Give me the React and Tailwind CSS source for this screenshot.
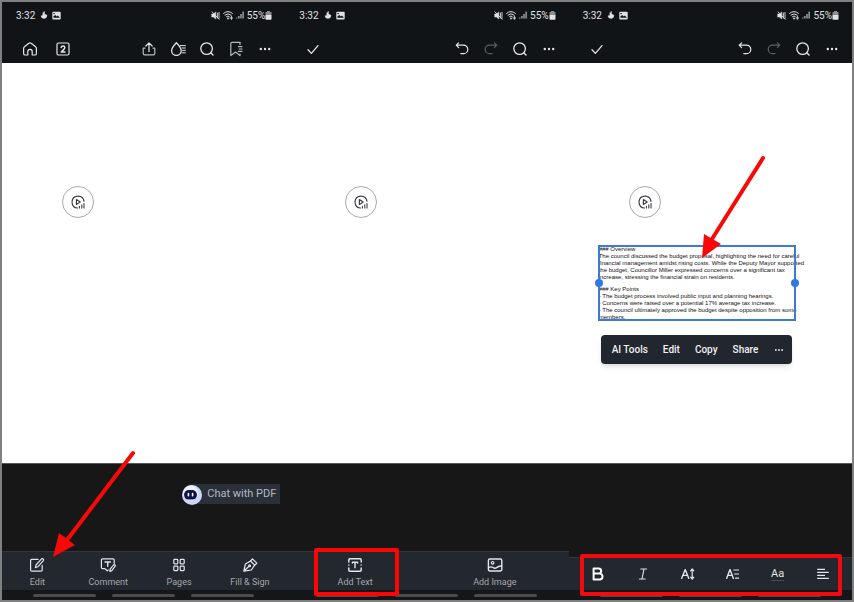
function Icon({ children, className = 'size-4', box = '0 0 16 16', label }) {
    return (
        <svg
            viewBox={box}
            className={className}
            fill="none"
            stroke="currentColor"
            strokeWidth="1.2"
            strokeLinecap="round"
            strokeLinejoin="round"
            role={label ? 'img' : undefined}
            aria-label={label}
            aria-hidden={label ? undefined : true}
        >
            {children}
        </svg>
    );
}

const icons = {
    home: <path d="M1.6 7.4 Q1.6 6.4 2.4 5.8 L6.9 2.2 Q8 1.5 9.1 2.2 L13.6 5.8 Q14.4 6.4 14.4 7.4 V12.4 Q14.4 14 12.8 14 H10.2 V10.6 A2.2 2.2 0 0 0 5.8 10.6 V14 H3.2 Q1.6 14 1.6 12.4 Z" />,
    tabs: (
        <>
            <rect x="2" y="2" width="12" height="12" rx="1.5" />
            <path d="M6.2 6.4 Q6.4 5 8 5 Q9.8 5 9.8 6.5 Q9.8 7.5 8.6 8.6 L6.2 11 H10" strokeWidth="1.5" />
        </>
    ),
    share: (
        <>
            <path d="M8 10.5 V2 M4.8 5 L8 1.8 L11.2 5" />
            <path d="M4 7.2 H2.2 V12.4 Q2.2 13.8 3.6 13.8 H12.4 Q13.8 13.8 13.8 12.4 V7.2 H12" stroke="#b9bcbf" />
        </>
    ),
    drop: (
        <>
            <path d="M6.4 1.8 Q1.6 6.8 1.6 9.8 A4.8 4.6 0 0 0 11.2 9.8 Q11.2 6.8 6.4 1.8 Z" strokeWidth="1.3" />
            <path d="M10.4 4.6 H15.4 M12 7 H15.4 M12.6 9.4 H15.4 M12 11.8 H15.4" strokeWidth="1" />
        </>
    ),
    search: (
        <>
            <circle cx="7.6" cy="7.6" r="5.8" strokeWidth="1.3" />
            <path d="M11.8 11.8 L14 14" strokeWidth="1.4" />
        </>
    ),
    bookmark: (
        <>
            <path d="M12 1.4 H4 Q2.8 1.4 2.8 2.6 V14.6 L7.6 11 L12 14.6 V13" />
            <path d="M12 1.6 V3.6 M10.4 5.6 H14 M11.2 8 H14 M10.4 10.4 H14" />
        </>
    ),
    more: (
        <g fill="currentColor" stroke="none">
            <circle cx="3.8" cy="8" r="1.2" />
            <circle cx="8" cy="8" r="1.2" />
            <circle cx="12.2" cy="8" r="1.2" />
        </g>
    ),
    check: <path d="M3 8.8 L6.4 12.4 L13 4.6" strokeWidth="1.3" />,
    undo: <path d="M4.6 1.8 L2.2 4.2 L4.6 6.6 M2.4 4.2 H9.6 A4.2 4.2 0 0 1 9.6 12.6 H6.8" />,
    redo: <path d="M11.4 1.8 L13.8 4.2 L11.4 6.6 M13.6 4.2 H6.4 A4.2 4.2 0 0 0 6.4 12.6 H9" />,
    edit: (
        <>
            <path d="M9 2.4 H2.8 Q1.6 2.4 1.6 3.6 V13 Q1.6 14.2 2.8 14.2 H12 Q13.2 14.2 13.2 13 V8.4" />
            <path d="M6.4 10.6 L7 8 L12.6 1.8 Q13.4 1.2 14.2 2 Q15 2.8 14.4 3.6 L8.8 9.8 Z" />
        </>
    ),
    comment: (
        <>
            <path d="M14.2 6.4 V3 Q14.2 1.8 13 1.8 H2.6 Q1.4 1.8 1.4 3 V10.4 Q1.4 11.6 2.6 11.6 H4.8 L7.2 13.8 L8.2 13" />
            <path d="M5 5 H10.4 M7.7 5 V9.2" strokeWidth="1.4" />
            <path d="M9.8 14.4 L10.2 12.2 L13.4 8 Q14.2 7.2 15 8 Q15.6 8.6 15 9.4 L11.8 13.6 Z" />
        </>
    ),
    pages: (
        <>
            <rect x="2.8" y="2.4" width="4" height="4.4" rx=".8" />
            <rect x="9.2" y="2.4" width="4" height="4.4" rx=".8" />
            <rect x="2.8" y="9.2" width="4" height="4.4" rx=".8" />
            <rect x="9.2" y="9.2" width="4" height="4.4" rx=".8" />
        </>
    ),
    sign: (
        <>
            <path d="M1.8 14.2 L3.4 7 L8.6 4 L12.6 8.2 L9.4 13 Z M2.2 13.8 L7 9.2" />
            <circle cx="7.6" cy="8.7" r=".9" />
            <path d="M8.6 4 L10.4 1.8 L14.8 6.2 L12.6 8.2" />
        </>
    ),
    addText: (
        <>
            <path d="M1.8 5 V3 Q1.8 1.8 3 1.8 H13 Q14.2 1.8 14.2 3 V5 M1.8 11 V13 Q1.8 14.2 3 14.2 H13 Q14.2 14.2 14.2 13 V11 M1.8 8 H1.9 M14.1 8 H14.2" strokeWidth="1.5" />
            <path d="M5.4 6 V5.2 H10.6 V6 M8 5.2 V10.8" strokeWidth="1.4" />
        </>
    ),
    addImage: (
        <>
            <rect x="1.4" y="2" width="13.4" height="12" rx="1.4" strokeWidth="1.4" />
            <circle cx="5.6" cy="5.8" r="1.3" />
            <path d="M1.6 10.8 Q4 9 6.2 10.6 Q8 11.8 9.6 10.6 Q12 8.6 14.6 9" strokeWidth="1.4" />
        </>
    ),
    bold: <path d="M3.6 2.4 H8.6 A2.6 2.6 0 0 1 8.6 7.6 H3.6 Z M3.6 7.6 H9.6 A2.9 2.9 0 0 1 9.6 13.4 H3.6 Z" strokeWidth="2" />,
    italic: <path d="M5.8 3 H11.6 M4.4 13 H10.2 M9 3 L7 13" strokeWidth="1.1" />,
    fontSize: (
        <>
            <path d="M1.6 12.4 L5.2 3.6 L8.8 12.4 M2.9 9.4 H7.5" strokeWidth="1.4" />
            <path d="M12.2 3.4 V12.6 M10.6 4.8 L12.2 3 L13.8 4.8 M10.6 11.2 L12.2 13 L13.8 11.2" />
        </>
    ),
    fontFamily: (
        <>
            <path d="M1.6 12.4 L5 3.6 L8.4 12.4 M2.8 9.4 H7.2" strokeWidth="1.4" />
            <path d="M8.8 4 H13.6 M9.6 8 H13.6 M10.6 12.2 H13.6" />
        </>
    ),
    align: <path d="M2.2 3.4 H10 M2.2 6.4 H13.8 M2.2 9.4 H10 M2.2 12.4 H13.8" strokeWidth="1.3" strokeLinecap="butt" />,
};

function IconButton({ name, label, className = 'text-[#e4e6e8]', disabled }) {
    return (
        <button type="button" aria-label={label} disabled={disabled} className={className}>
            <Icon>{icons[name]}</Icon>
        </button>
    );
}

function StatusBar() {
    return (
        <div className="flex h-[26px] items-center justify-between pr-[13px] pl-3.5 text-[10px] text-[#e0e2e4]">
            <div className="flex items-center gap-1">
                <span className="mr-px">3:32</span>
                <Icon className="size-2" box="0 0 8 8">
                    <path d="M4.5 .5 V3 L7 4.2 Q6.8 7.5 4 7.5 Q1.2 7.4 1 4.8 L2.8 4.6 V2 Z" fill="currentColor" strokeWidth=".4" />
                </Icon>
                <Icon className="size-[9px]" box="0 0 9 9">
                    <rect x=".3" y=".8" width="8.4" height="7.8" rx="1" fill="currentColor" stroke="none" />
                    <path d="M1.4 5.6 L3.2 4 L4.8 5.4 L5.8 4.6 L7.6 6.2 V6.8 H1.4 Z" fill="#101417" stroke="none" />
                    <path d="M1.6 2.6 H2.6" stroke="#101417" strokeWidth=".9" />
                </Icon>
            </div>
            <div className="flex items-center gap-[3px]">
                <Icon className="size-[9px]" box="0 0 9 9">
                    <path d="M.8 3 H2.4 L4.8 1 V8 L2.4 6 H.8 Z" fill="currentColor" strokeWidth=".5" />
                    <path d="M1 .8 L8 8.2 M6.4 2 V7 M8 1.4 V7.4" strokeWidth=".9" />
                </Icon>
                <Icon className="size-2.5" box="0 0 10 10">
                    <path d="M.6 3.4 Q5 -.4 9.4 3.4 M2 5 Q5 2.4 8 5 M3.5 6.6 Q5 5.4 6.2 6.4" strokeWidth="1" />
                    <circle cx="5" cy="8.4" r=".9" fill="currentColor" stroke="none" />
                    <path d="M8.4 6 V9.4 M6.9 8 H9.8" strokeWidth=".9" />
                </Icon>
                <Icon className="size-2" box="0 0 8 8">
                    <path d="M.8 6.6 V7.5 M2.9 5 V7.5 M5 3 V7.5 M7.1 .6 V7.5" strokeWidth="1" strokeLinecap="butt" />
                </Icon>
                <span className="flex items-center">
                    55%
                    <Icon className="h-[9px] w-[7px]" box="0 0 7 9">
                        <path d="M2 0 H5 V1 H6.5 V4 H.5 V1 H2 Z" fill="#8a8d90" stroke="none" />
                        <path d="M.5 4 H6.5 V8 Q6.5 8.8 5.7 8.8 H1.3 Q.5 8.8 .5 8 Z" fill="currentColor" stroke="none" />
                    </Icon>
                </span>
            </div>
        </div>
    );
}

function Phone({ left, right, children, footer }) {
    return (
        <section className="relative flex min-w-0 flex-col bg-[#171717]">
            <header className="bg-[#101417]">
                <StatusBar />
                <div className="flex h-[35px] items-center justify-between pt-[7px] pr-3 pl-5">
                    <div className="flex gap-[17px]">{left}</div>
                    <div className="flex gap-[13px]">{right}</div>
                </div>
            </header>
            <div className="relative grow border-b border-[#555] bg-white pt-[123px] pl-[60px]">
                <button
                    type="button"
                    aria-label="Play"
                    className="flex size-8 items-center justify-center rounded-full border border-[#aaa] text-[#3a3c40]"
                >
                    <Icon>
                        <path d="M7.4 14 A6 6 0 1 1 14 7.4" strokeWidth="1.2" strokeDasharray="8 1" />
                        <path d="M6.4 5.6 V10.4 L10.2 8 Z" />
                        <path d="M9.4 12.4 V14 M11.8 10.8 V14 M14 9.6 V14" strokeWidth="1.1" />
                    </Icon>
                </button>
                {children}
            </div>
            {footer}
            <div className="flex h-2.5 items-center justify-center gap-4 bg-[#15161a]">
                <span className="h-[3px] w-[63px] rounded-full bg-[#4b4b4e]" />
                <span className="h-[3px] w-[63px] rounded-full bg-[#4b4b4e]" />
                <span className="h-[3px] w-[63px] rounded-full bg-[#4b4b4e]" />
            </div>
        </section>
    );
}

function BarItem({ name, label }) {
    return (
        <button type="button" className="flex flex-col items-center gap-1 text-[#e4e6e8]">
            <Icon>{icons[name]}</Icon>
            <span className="text-[9px] leading-[10px] text-[#a3a7ad]">{label}</span>
        </button>
    );
}

function EditActions() {
    return (
        <>
            <IconButton name="undo" label="Undo" />
            <IconButton name="redo" label="Redo" className="text-[#5d6164]" disabled />
            <IconButton name="search" label="Search" />
            <IconButton name="more" label="More" />
        </>
    );
}

const overview = [
    '### Overview',
    'The council discussed the budget proposal, highlighting the need for careful',
    'financial management amidst rising costs. While the Deputy Mayor supported',
    'the budget, Councillor Miller expressed concerns over a significant tax',
    'increase, stressing the financial strain on residents.',
];

const keyPoints = [
    '### Key Points',
    '- The budget process involved public input and planning hearings.',
    '- Concerns were raised over a potential 17% average tax increase.',
    '- The council ultimately approved the budget despite opposition from some',
    'members.',
];

function TextBlock({ lines }) {
    return (
        <p>
            {lines.map((line) => (
                <span key={line} className="block whitespace-nowrap">{line}</span>
            ))}
        </p>
    );
}

export default function App() {
    return (
        <main className="grid min-h-screen grid-cols-3 overflow-hidden border-2 border-[#808080] bg-[#171717] font-['Roboto',sans-serif]">
            {/* Reader view */}
            <Phone
                left={
                    <>
                        <IconButton name="home" label="Home" />
                        <IconButton name="tabs" label="2 open tabs" />
                    </>
                }
                right={
                    <>
                        <IconButton name="share" label="Share" />
                        <IconButton name="drop" label="Liquid mode" />
                        <IconButton name="search" label="Search" />
                        <IconButton name="bookmark" label="Bookmarks" className="text-[#b4b7ba]" />
                        <IconButton name="more" label="More" />
                    </>
                }
                footer={
                    <>
                        <div className="flex h-[87px] items-start justify-end pt-5 pr-[5px]">
                            <button type="button" className="flex h-5 items-center gap-[5px] rounded-l-full rounded-r bg-[#2b3038] pt-px pr-1 text-[11px] text-[#b4b9c0]">
                                <svg viewBox="0 0 20 20" className="size-5" aria-hidden="true">
                                    <circle cx="10" cy="10" r="10" fill="#c9d8f8" />
                                    <circle cx="8.6" cy="8" r="7.6" fill="#eef3fe" />
                                    <rect x="2" y="5" width="13" height="9.6" rx="4.8" fill="#12124a" />
                                    <path d="M6.4 8.6 V10.8 M10.6 8.6 V10.8" stroke="#fff" strokeWidth="1.6" strokeLinecap="round" />
                                </svg>
                                Chat with PDF
                            </button>
                        </div>
                        <nav className="grid h-[39px] grid-cols-4 items-start border-t border-[#32363b] bg-[#23272e] pt-[5px]">
                            <BarItem name="edit" label="Edit" />
                            <BarItem name="comment" label="Comment" />
                            <BarItem name="pages" label="Pages" />
                            <BarItem name="sign" label="Fill & Sign" />
                        </nav>
                        <svg viewBox="0 0 90 110" className="absolute bottom-10 left-[50px] h-[110px] w-[90px]" aria-hidden="true">
                            <path d="M81 3 L15 90" stroke="#f90808" strokeWidth="4" strokeLinecap="round" />
                            <path d="M1 107 L7 83 L23 95 Z" fill="#f90808" />
                        </svg>
                    </>
                }
            />

            {/* Edit mode */}
            <Phone
                left={<IconButton name="check" label="Done" />}
                right={<EditActions />}
                footer={
                    <>
                        <div className="h-[87px]" />
                        <nav className="relative grid h-[39px] grid-cols-2 items-start border-t border-[#32363b] bg-[#23272e] pt-[5px] pr-1">
                            <BarItem name="addText" label="Add Text" />
                            <BarItem name="addImage" label="Add Image" />
                            <span className="absolute -top-1 left-[29px] h-12 w-[85px] rounded-xs border-4 border-[#fb0505]" />
                        </nav>
                    </>
                }
            />

            {/* Text added */}
            <Phone
                left={<IconButton name="check" label="Done" />}
                right={<EditActions />}
                footer={
                    <>
                        <div className="h-[93px]" />
                        <nav className="relative grid h-[33px] grid-cols-6 items-center justify-items-center border-t border-[#32363b] bg-[#23272e] px-[7px]">
                            <IconButton name="bold" label="Bold" className="text-white" />
                            <IconButton name="italic" label="Italic" />
                            <IconButton name="fontSize" label="Font size" />
                            <IconButton name="fontFamily" label="Font" />
                            <button type="button" aria-label="Text color" className="border-b border-[#4a4d52] text-[11px] leading-3 text-[#e4e6e8]">Aa</button>
                            <IconButton name="align" label="Alignment" />
                            <span className="absolute -top-1 right-2.5 left-[11px] h-[42px] rounded-xs border-4 border-[#f20a10]" />
                        </nav>
                    </>
                }
            >
                <div className="absolute top-[182px] left-[29px] h-[76px] w-[198px] pt-px pl-px font-['Liberation_Sans',Arial,sans-serif] text-[6px] leading-[7px] text-[#111]">
                    <TextBlock lines={overview} />
                    <div className="mt-[5px]">
                        <TextBlock lines={keyPoints} />
                    </div>
                    <span className="absolute inset-0 border-2 border-[#3d7bd0]" />
                    <span className="absolute top-[34px] -left-[3px] size-2 rounded-full bg-[#2f78e6]" />
                    <span className="absolute top-[34px] -right-[3px] size-2 rounded-full bg-[#2f78e6]" />
                </div>
                <div className="absolute top-[272px] left-8 flex h-[29px] items-center gap-[15px] rounded bg-[#22262e] pr-[7px] pl-[11px] text-[10px] font-medium whitespace-nowrap text-[#f0f1f3] shadow-md">
                    <button type="button">AI Tools</button>
                    <button type="button">Edit</button>
                    <button type="button">Copy</button>
                    <button type="button">Share</button>
                    <button type="button" aria-label="More">
                        <Icon className="size-3">{icons.more}</Icon>
                    </button>
                </div>
                <svg viewBox="0 0 70 110" className="absolute top-[90px] left-[131px] h-[110px] w-[70px]" aria-hidden="true">
                    <path d="M63 5 L12 86" stroke="#f90808" strokeWidth="4" strokeLinecap="round" />
                    <path d="M2 105 L4 81 L21 91 Z" fill="#f90808" />
                </svg>
            </Phone>
        </main>
    );
}
